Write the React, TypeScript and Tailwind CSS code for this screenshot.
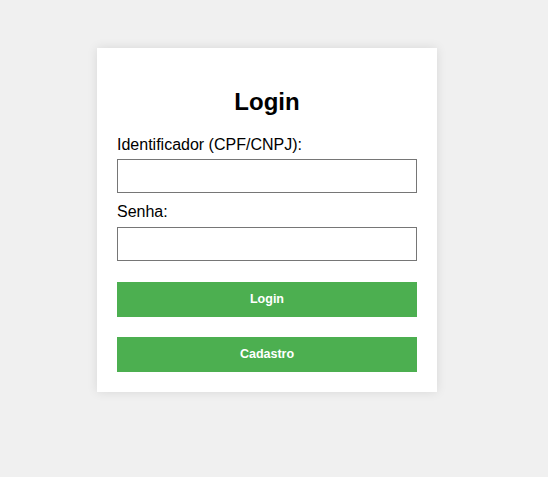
import React from "react";

export default function App() {
  return (
    <div
      className="min-h-[477px] w-full bg-[#f0f0f0] pt-[48px] pl-[97px]"
      style={{ fontFamily: '"Liberation Sans", Arial, sans-serif' }}
    >
      <div className="w-[340px] bg-white p-5 shadow-[0_0_10px_rgba(0,0,0,0.1)]">
        <h2 className="my-5 text-center text-[24px] font-bold leading-[28px] text-black">
          Login
        </h2>
        <form className="flex flex-col" onSubmit={(e) => e.preventDefault()}>
          <label className="mb-[5px] text-[16px] leading-[18px] text-black">
            Identificador (CPF/CNPJ):
          </label>
          <input
            type="text"
            className="mb-[10px] h-[34px] w-full border border-[#767676] bg-white px-2 text-[16px] outline-none"
          />
          <label className="mb-[6px] text-[16px] leading-[18px] text-black">
            Senha:
          </label>
          <input
            type="password"
            className="h-[34px] w-full border border-[#767676] bg-white px-2 text-[16px] outline-none"
          />
          <button
            type="submit"
            className="mt-[21px] h-[35px] w-full bg-[#4caf50] text-[12.5px] font-bold text-white"
          >
            Login
          </button>
          <button
            type="button"
            className="mt-5 h-[35px] w-full bg-[#4caf50] text-[12.5px] font-bold text-white"
          >
            Cadastro
          </button>
        </form>
      </div>
    </div>
  );
}
